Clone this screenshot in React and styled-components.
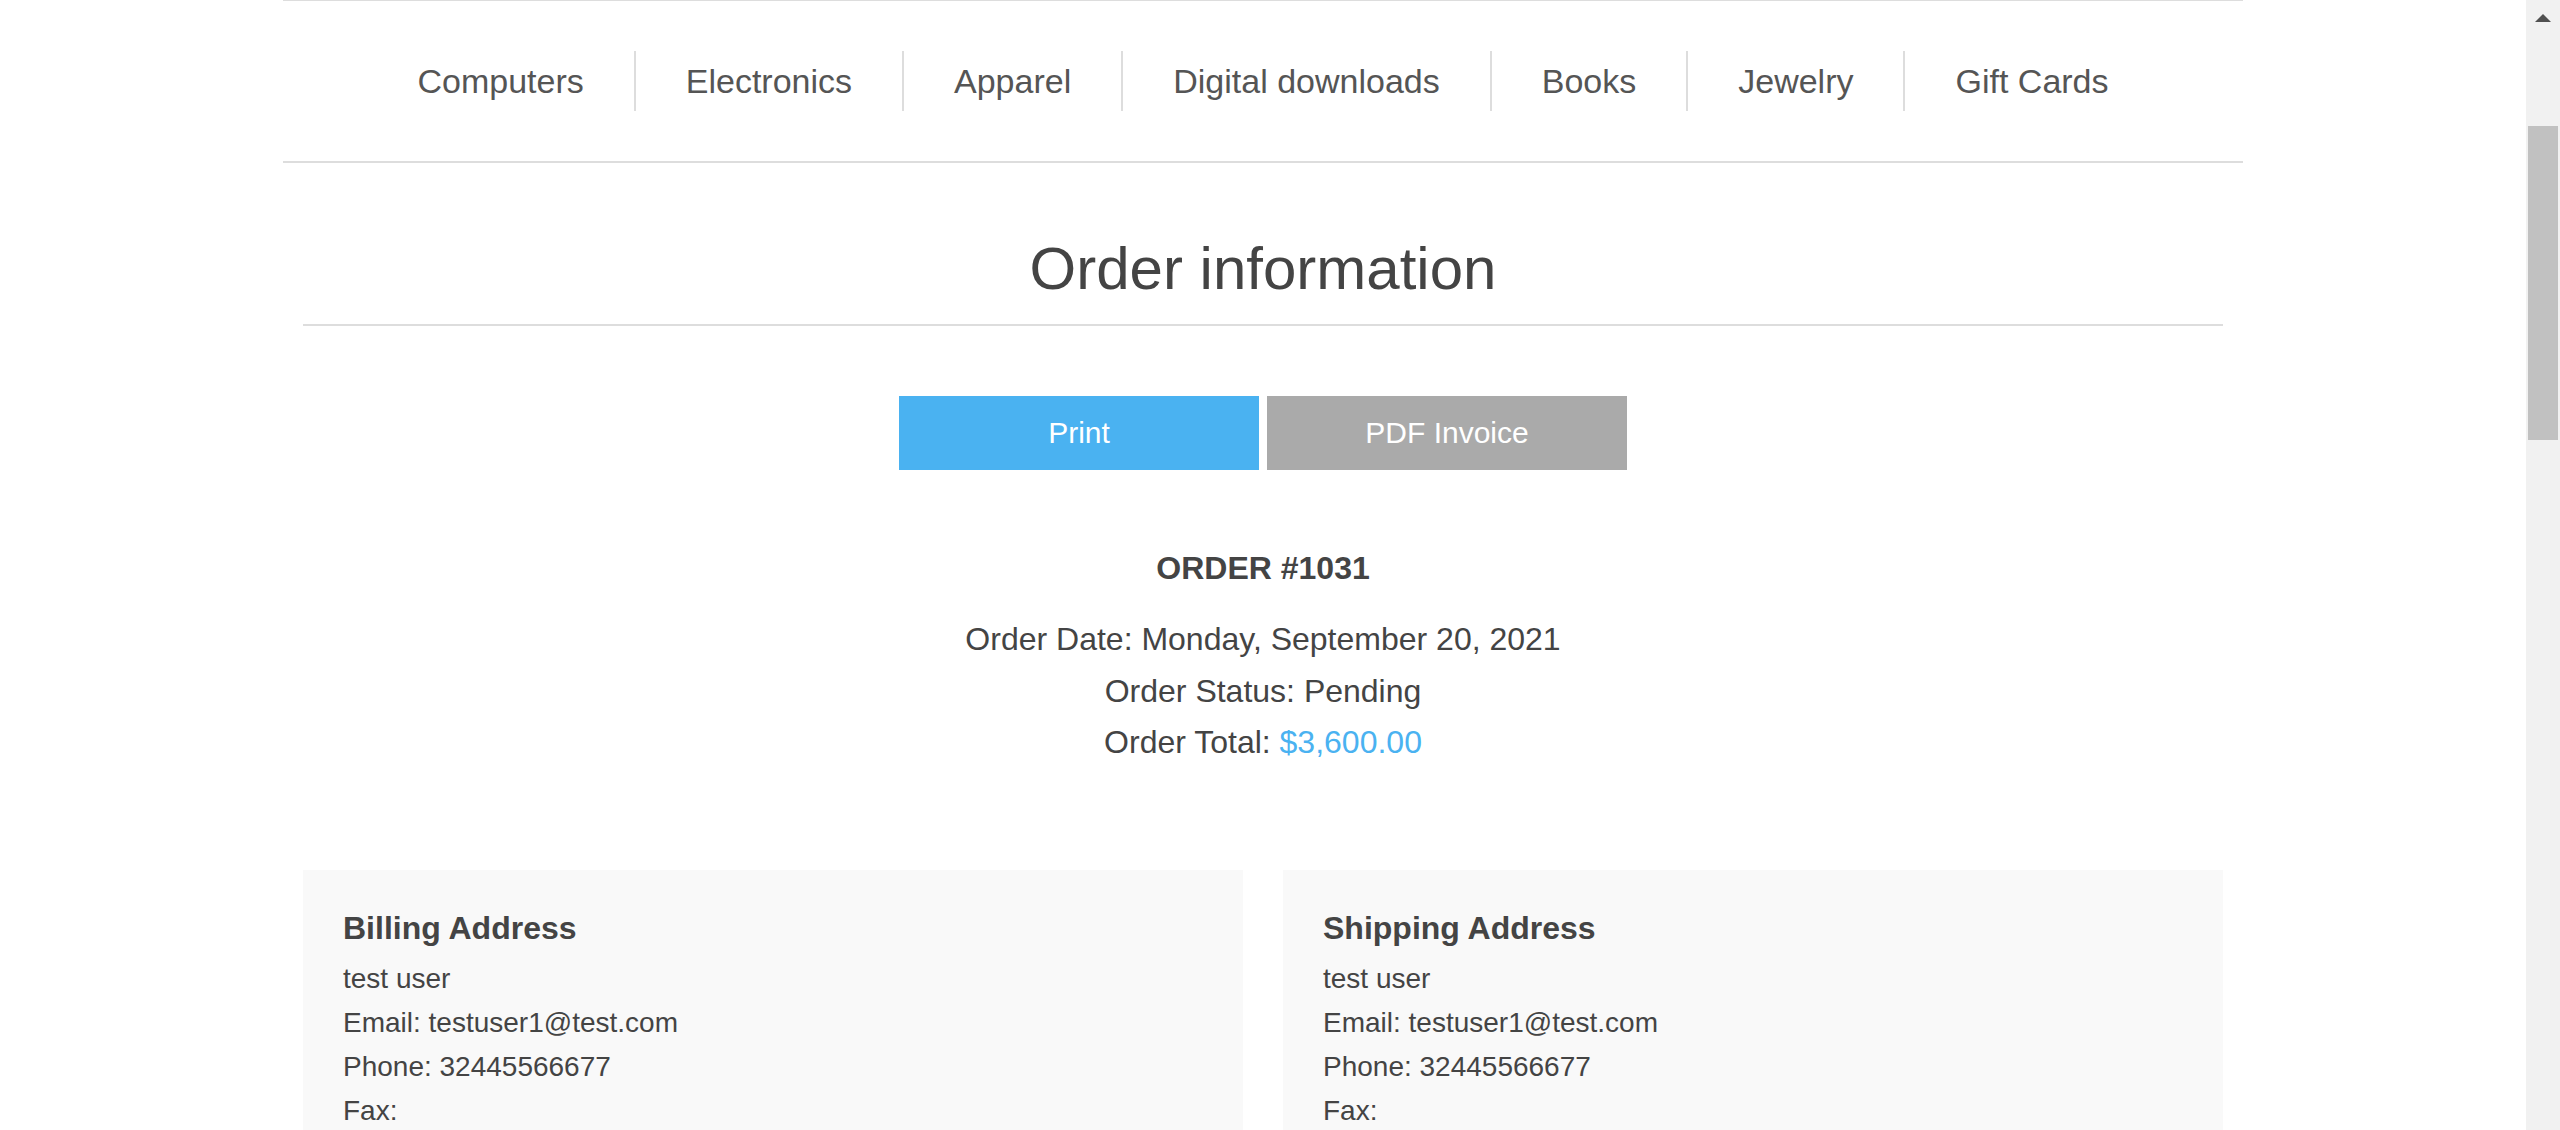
import React from 'react';
import styled, { createGlobalStyle } from 'styled-components';

const GlobalStyle = createGlobalStyle`
  * {
    box-sizing: border-box;
  }

  html,
  body {
    margin: 0;
    padding: 0;
    height: 100%;
    overflow: hidden;
    background: #fff;
  }

  body {
    font-family: 'Liberation Sans', Arial, sans-serif;
    color: #444;
  }
`;

const menuItems = [
  'Computers',
  'Electronics',
  'Apparel',
  'Digital downloads',
  'Books',
  'Jewelry',
  'Gift Cards',
];

const address = [
  'test user',
  'Email: testuser1@test.com',
  'Phone: 32445566677',
  'Fax:',
];

const AddressBox = ({ title, lines }) => (
  <InfoBox>
    <InfoTitle>{title}</InfoTitle>
    <InfoList>
      {lines.map((line) => (
        <li key={line}>{line}</li>
      ))}
    </InfoList>
  </InfoBox>
);

const App = () => {
  return (
    <>
      <GlobalStyle />
      <Screen>
        <Page>
          <Master>
            <HeaderMenu>
              <MenuList>
                {menuItems.map((item) => (
                  <MenuItem key={item}>{item}</MenuItem>
                ))}
              </MenuList>
            </HeaderMenu>

            <Content>
              <PageTitle>
                <h1>Order information</h1>
              </PageTitle>

              <Actions>
                <ActionButton $color="#4ab2f1">Print</ActionButton>
                <ActionButton $color="#aaa">PDF Invoice</ActionButton>
              </Actions>

              <OrderNumber>ORDER #1031</OrderNumber>
              <OrderDetails>
                <li>Order Date: Monday, September 20, 2021</li>
                <li>Order Status: Pending</li>
                <li>
                  Order Total: <Total>$3,600.00</Total>
                </li>
              </OrderDetails>

              <InfoGrid>
                <AddressBox title="Billing Address" lines={address} />
                <AddressBox title="Shipping Address" lines={address} />
              </InfoGrid>
            </Content>
          </Master>
        </Page>

        <Scrollbar>
          <ArrowUp />
          <Thumb />
        </Scrollbar>
      </Screen>
    </>
  );
};

export default App;

const Screen = styled.div`
  display: flex;
  height: 100vh;
  overflow: hidden;
`;

const Page = styled.div`
  flex: 1;
  overflow: hidden;
`;

const Master = styled.div`
  width: 1960px;
  margin: 0 auto;
`;

const HeaderMenu = styled.nav`
  border-top: 1px solid #ddd;
  border-bottom: 2px solid #ddd;
  padding: 50px 0;
`;

const MenuList = styled.ul`
  display: flex;
  justify-content: center;
  margin: 0;
  padding: 0;
  list-style: none;
`;

const MenuItem = styled.li`
  padding: 0 50px;
  font-size: 34px;
  line-height: 60px;
  color: #555;
  white-space: nowrap;

  & + & {
    border-left: 2px solid #ddd;
  }
`;

const Content = styled.div`
  padding: 0 20px;
`;

const PageTitle = styled.div`
  margin-top: 70px;
  padding-bottom: 19px;
  border-bottom: 2px solid #ddd;
  text-align: center;

  h1 {
    margin: 0;
    font-size: 60px;
    line-height: 72px;
    font-weight: normal;
    color: #444;
  }
`;

const Actions = styled.div`
  display: flex;
  justify-content: center;
  gap: 8px;
  margin-top: 70px;
`;

const ActionButton = styled.button`
  width: 360px;
  height: 74px;
  border: none;
  padding: 0;
  background: ${(p) => p.$color};
  color: #fff;
  font-family: inherit;
  font-size: 30px;
`;

const OrderNumber = styled.div`
  margin-top: 78px;
  text-align: center;
  font-size: 32px;
  line-height: 40px;
  font-weight: bold;
  color: #444;
`;

const OrderDetails = styled.ul`
  margin: 26px 0 0;
  padding: 0;
  list-style: none;
  text-align: center;
  font-size: 32px;
  line-height: 51.5px;
  color: #444;
`;

const Total = styled.span`
  color: #4ab2f1;
`;

const InfoGrid = styled.div`
  display: grid;
  grid-template-columns: 1fr 1fr;
  gap: 40px;
  margin-top: 101px;
`;

const InfoBox = styled.div`
  background: #f9f9f9;
  padding: 40px;
`;

const InfoTitle = styled.div`
  font-size: 32px;
  line-height: 36px;
  font-weight: bold;
  color: #444;
  margin-bottom: 11px;
`;

const InfoList = styled.ul`
  margin: 0;
  padding: 0;
  list-style: none;
  font-size: 28px;
  line-height: 44px;
  color: #444;
`;

const Scrollbar = styled.div`
  width: 34px;
  flex-shrink: 0;
  background: #f1f1f1;
  display: flex;
  flex-direction: column;
  align-items: center;
  padding-top: 14px;
`;

const ArrowUp = styled.div`
  width: 0;
  height: 0;
  border-left: 8px solid transparent;
  border-right: 8px solid transparent;
  border-bottom: 8px solid #505050;
`;

const Thumb = styled.div`
  margin-top: 104px;
  width: 30px;
  height: 314px;
  background: #c1c1c1;
`;
